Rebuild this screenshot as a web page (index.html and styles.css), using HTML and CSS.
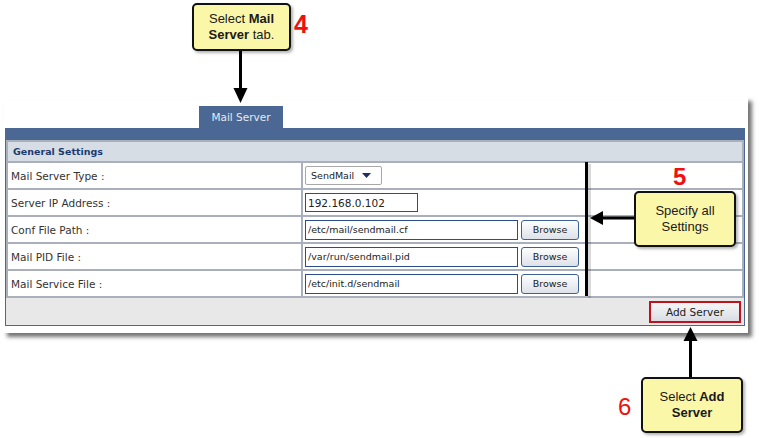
FILE: index.html
```html
<!DOCTYPE html>
<html lang="en">
<head>
  <meta charset="UTF-8" />
  <title>Mail Server Settings</title>
  <link rel="stylesheet" href="styles.css">
</head>
<body>
  <div class="canvas">
    <div class="frame">
      <div class="tabs">
        <div class="tab">Mail Server</div>
      </div>

      <div class="panel">
        <div class="panel-bar"></div>
        <table class="settings">
          <tr>
            <td class="group" colspan="2">General Settings</td>
          </tr>
          <tr>
            <td class="label">Mail Server Type :</td>
            <td class="field">
              <div class="select-box">
                <span>SendMail</span>
                <svg width="9" height="5" viewBox="0 0 9 5"><polygon points="0,0 9,0 4.5,5" fill="#1d2f5c"/></svg>
              </div>
            </td>
          </tr>
          <tr>
            <td class="label">Server IP Address :</td>
            <td class="field"><input class="ip" type="text" value="192.168.0.102"></td>
          </tr>
          <tr>
            <td class="label">Conf File Path :</td>
            <td class="field"><input class="path" type="text" value="/etc/mail/sendmail.cf"><button class="browse">Browse</button></td>
          </tr>
          <tr>
            <td class="label">Mail PID File :</td>
            <td class="field"><input class="path" type="text" value="/var/run/sendmail.pid"><button class="browse">Browse</button></td>
          </tr>
          <tr>
            <td class="label">Mail Service File :</td>
            <td class="field"><input class="path" type="text" value="/etc/init.d/sendmail"><button class="browse">Browse</button></td>
          </tr>
        </table>
        <div class="panel-foot">
          <button class="add-btn">Add Server</button>
        </div>
      </div>
    </div>

    <!-- annotations -->
    <svg class="marks" width="765" height="438" viewBox="0 0 765 438">
      <line x1="240.5" y1="50" x2="240.5" y2="90" stroke="#000" stroke-width="3"/>
      <polygon points="233.5,88 247.5,88 240.5,103" fill="#000"/>

      <rect x="588" y="164" width="3" height="134" fill="#000" opacity="0.15"/>
      <rect x="585" y="162" width="3" height="134" fill="#000"/>

      <line x1="634" y1="218" x2="601" y2="218" stroke="#000" stroke-width="3"/>
      <polygon points="603,211 603,225 590,218" fill="#000"/>

      <line x1="690.5" y1="377" x2="690.5" y2="339" stroke="#000" stroke-width="3"/>
      <polygon points="683.5,341 697.5,341 690.5,327" fill="#000"/>
    </svg>

    <div class="callout callout-tab"><p>Select <b>Mail</b><br><b>Server</b> tab.</p></div>
    <div class="callout callout-settings"><p>Specify all<br>Settings</p></div>
    <div class="callout callout-add"><p>Select <b>Add</b><br><b>Server</b></p></div>

    <span class="step step-4">4</span>
    <span class="step step-5">5</span>
    <span class="step step-6">6</span>
  </div>
</body>
</html>
```

FILE: styles.css
```css
body {
  margin: 0;
  background: #fff;
}
.canvas {
  position: relative;
  width: 765px;
  height: 438px;
  overflow: hidden;
  background: #fff;
  font-family: "DejaVu Sans", Verdana, sans-serif;
}
.frame {
  margin: 97px 0 0 3px;
  width: 745px;
  height: 236px;
  background: #fff;
  box-shadow: 4px 4px 4px rgba(0, 0, 0, 0.55);
}
.tabs {
  padding: 9px 0 0 196px;
  display: flex;
}
.tab {
  width: 84px;
  height: 22px;
  line-height: 22px;
  background: #4a6893;
  color: #e4eaf2;
  font-size: 10.5px;
  text-align: center;
}
.panel {
  margin-left: 2px;
  width: 740px;
  box-sizing: border-box;
  border: 1px solid #4a6893;
  border-top: 0;
}
.panel-bar {
  height: 12px;
  background: #4a6893;
}
.settings {
  width: 100%;
  border-collapse: collapse;
}
.settings td {
  border: 2px solid #a9b0bb;
  padding: 0;
  height: 25px;
}
.settings td.group {
  height: 19px;
  background: #d6dde5;
  color: #1b3b70;
  font-weight: bold;
  font-size: 9.5px;
  padding-left: 5px;
}
.label {
  width: 290px;
  padding-left: 3px !important;
  font-size: 10.5px;
  color: #333;
}
.field {
  padding-left: 2px !important;
  font-size: 0;
}
.select-box {
  display: inline-flex;
  align-items: center;
  gap: 8px;
  width: 77px;
  height: 19px;
  box-sizing: border-box;
  padding-left: 5px;
  border: 1px solid #a8a8a8;
  border-radius: 2px;
  background: #fff;
  font-size: 9.5px;
  color: #222;
  vertical-align: middle;
}
input {
  height: 20px;
  box-sizing: border-box;
  border: 1px solid #2b4d8f;
  padding: 0 2px;
  font-family: "DejaVu Sans", Verdana, sans-serif;
  font-size: 9.5px;
  color: #222;
  vertical-align: middle;
}
input.ip {
  width: 113px;
  height: 19px;
  font-size: 10.5px;
}
input.path {
  width: 213px;
}
.browse {
  margin-left: 3px;
  width: 58px;
  height: 20px;
  border: 1px solid #3d6291;
  border-radius: 3px;
  background: linear-gradient(#fdfdfd, #dde2e9);
  font-family: "DejaVu Sans", Verdana, sans-serif;
  font-size: 9.5px;
  color: #222;
  padding: 0;
  vertical-align: middle;
}
.panel-foot {
  height: 27px;
  background: #e8e8e8;
  display: flex;
  justify-content: flex-end;
  align-items: center;
  padding-right: 3px;
}
.add-btn {
  width: 92px;
  height: 22px;
  border: 2px solid #c4101c;
  background: linear-gradient(#f6f7f8, #d9dde3);
  font-family: "DejaVu Sans", Verdana, sans-serif;
  font-size: 10.5px;
  color: #222;
  padding: 0;
}

.marks {
  position: absolute;
  left: 0;
  top: 0;
  pointer-events: none;
}
.callout {
  position: absolute;
  display: flex;
  align-items: center;
  justify-content: center;
  text-align: center;
  box-sizing: border-box;
  background: #faf7a8;
  border: 2px solid #111;
  border-radius: 5px;
  box-shadow: 2px 2px 3px rgba(0, 0, 0, 0.3);
  font-family: "Liberation Sans", Arial, sans-serif;
  font-size: 13px;
  line-height: 16px;
  color: #1a1a1a;
}
.callout p {
  margin: 0;
}
.callout-tab {
  left: 192px;
  top: 3px;
  width: 99px;
  height: 48px;
}
.callout-settings {
  left: 634px;
  top: 191px;
  width: 102px;
  height: 56px;
}
.callout-add {
  left: 641px;
  top: 377px;
  width: 102px;
  height: 56px;
}
.step {
  position: absolute;
  font-family: "Liberation Sans", Arial, sans-serif;
  font-weight: bold;
  line-height: 1;
  color: #ee1111;
}
.step-4 {
  left: 294px;
  top: 12px;
  font-size: 25px;
}
.step-5 {
  left: 673px;
  top: 165px;
  font-size: 24px;
}
.step-6 {
  left: 618px;
  top: 395px;
  font-size: 24px;
  font-weight: normal;
}
```
